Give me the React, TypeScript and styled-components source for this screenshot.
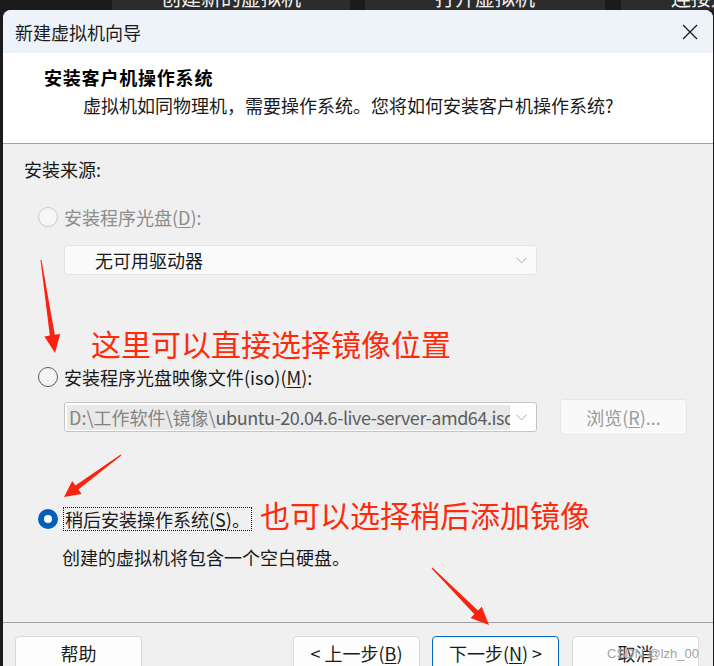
import React from "react";
import styled, { createGlobalStyle } from "styled-components";

const FONT = `"Noto Sans CJK SC", "Noto Sans", sans-serif`;

const Global = createGlobalStyle`
  html, body {
    margin: 0;
    padding: 0;
    width: 714px;
    height: 666px;
    overflow: hidden;
    background: #1b1b1b;
    font-family: ${FONT};
  }
  * { box-sizing: border-box; }
`;

const Page = styled.div`
  position: relative;
  width: 714px;
  height: 666px;
  overflow: hidden;
  display: flex;
  flex-direction: column;
`;

const TabStrip = styled.div`
  height: 10px;
  display: flex;
  overflow: hidden;
  flex-shrink: 0;
`;

const TabGap = styled.div<{ $w: number }>`
  width: ${(p) => p.$w}px;
  flex-shrink: 0;
  background: #1b1b1b;
`;

const Tab = styled.div<{ $w: number }>`
  width: ${(p) => p.$w}px;
  flex-shrink: 0;
  background: #2c2c2c;
  display: flex;
  justify-content: center;
  align-items: flex-start;
`;

const TabLabel = styled.span`
  margin-top: -12px;
  font-size: 20px;
  line-height: 20px;
  color: #f2f2f2;
  white-space: nowrap;
`;

const Dialog = styled.div`
  flex: 1;
  margin: 0 1px 0 3px;
  border-radius: 8px 8px 0 0;
  overflow: hidden;
  background: #f0f0f0;
  display: flex;
  flex-direction: column;
`;

const TitleBar = styled.div`
  height: 43px;
  flex-shrink: 0;
  background: #eef2f9;
  display: flex;
  align-items: center;
  justify-content: space-between;
  padding: 0 15px 0 12px;
`;

const Title = styled.span`
  font-size: 18px;
  line-height: 24px;
  color: #1a1a1a;
`;

const CloseButton = styled.span`
  width: 16px;
  height: 16px;
  display: flex;
  align-items: center;
  justify-content: center;
`;

const Header = styled.div`
  height: 91px;
  flex-shrink: 0;
  background: #ffffff;
  border-bottom: 1px solid #a3a3a3;
  padding: 12px 0 0 41px;
`;

const HeaderTitle = styled.div`
  font-size: 18px;
  line-height: 24px;
  font-weight: 700;
  letter-spacing: 0.8px;
  color: #000;
`;

const HeaderSub = styled.div`
  margin: 4px 0 0 39px;
  font-size: 18px;
  line-height: 24px;
  color: #1a1a1a;
`;

const Content = styled.div`
  height: 479px;
  flex-shrink: 0;
  border-bottom: 1px solid #a0a0a0;
  padding: 13px 0 0 21px;
  display: flex;
  flex-direction: column;
  align-items: flex-start;
`;

const SourceLabel = styled.div`
  font-size: 18px;
  line-height: 24px;
  color: #1a1a1a;
`;

const RadioRow = styled.div<{ $top: number; $h?: number }>`
  margin-top: ${(p) => p.$top}px;
  height: ${(p) => p.$h ?? 24}px;
  padding-left: 14px;
  display: flex;
  align-items: center;
  gap: 6px;
`;

const Radio = styled.span<{ $state: "disabled" | "normal" | "checked" }>`
  width: 20px;
  height: 20px;
  border-radius: 50%;
  flex-shrink: 0;
  ${(p) =>
    p.$state === "disabled"
      ? `border: 1px solid #c9c9c9; background: #f6f6f6;`
      : p.$state === "normal"
      ? `border: 1px solid #5b5b5b; background: #f4f4f4;`
      : `border: 6px solid #005fb8; background: #ffffff;`}
`;

const RadioLabel = styled.span<{ $disabled?: boolean; $focused?: boolean }>`
  font-size: 18px;
  line-height: 22px;
  white-space: nowrap;
  color: ${(p) => (p.$disabled ? "#8c8c8c" : "#1a1a1a")};
  ${(p) =>
    p.$focused
      ? `outline: 1px dotted #111; outline-offset: 0px; padding: 0 1px;`
      : ""}
`;

const Key = styled.span`
  text-decoration: underline;
  text-underline-offset: 2px;
`;

const Combo = styled.div<{ $disabled?: boolean; $top: number }>`
  margin: ${(p) => p.$top}px 0 0 40px;
  width: 473px;
  height: 30px;
  flex-shrink: 0;
  border-radius: 3px;
  border: 1px solid ${(p) => (p.$disabled ? "#e4e4e4" : "#c4c4c4")};
  background: ${(p) => (p.$disabled ? "#fafafa" : "#ffffff")};
  display: flex;
  align-items: center;
  justify-content: space-between;
  padding: 0 9px 0 2px;
`;

const ComboText = styled.span`
  padding-left: 28px;
  font-size: 18px;
  line-height: 24px;
  color: #1a1a1a;
`;

const PathField = styled.span`
  width: 443px;
  height: 25px;
  overflow: hidden;
  white-space: nowrap;
  background: #e9e9e9;
  padding-left: 2px;
  font-size: 18px;
  line-height: 25px;
  color: #5c5c5c;
`;

const PathPrefix = styled.span`
  color: #838383;
`;

const PathName = styled.span`
  letter-spacing: -0.45px;
`;

const FileRow = styled.div`
  margin-top: 10px;
  height: 36px;
  display: flex;
  align-items: center;
  gap: 23px;
`;

const BrowseButton = styled.span`
  width: 127px;
  height: 36px;
  border-radius: 4px;
  border: 1px solid #e6e6e6;
  background: #f9f9f9;
  display: flex;
  align-items: center;
  justify-content: center;
  font-size: 18px;
  color: #9b9b9b;
`;

const RedNote = styled.div<{ $inline?: boolean }>`
  font-family: ${FONT};
  font-size: 30px;
  line-height: 40px;
  color: #ff2a0c;
  white-space: nowrap;
  ${(p) =>
    p.$inline
      ? `margin: 0 0 10px 3px;`
      : `margin: 48px 0 0 67px;`}
`;

const Note = styled.div`
  margin: 6px 0 0 38px;
  font-size: 18px;
  line-height: 24px;
  color: #1a1a1a;
`;

const Footer = styled.div`
  flex: 1;
  display: flex;
  align-items: flex-start;
  padding: 13px 14px 0 12px;
`;

const Button = styled.span<{ $primary?: boolean; $gap?: number; $auto?: boolean }>`
  width: 127px;
  height: 36px;
  flex-shrink: 0;
  margin-left: ${(p) => (p.$auto ? "auto" : `${p.$gap ?? 0}px`)};
  border-radius: 4px;
  border: 1px solid ${(p) => (p.$primary ? "#0067c0" : "#d9d9d9")};
  background: #fdfdfd;
  display: flex;
  align-items: center;
  justify-content: center;
  padding-bottom: 2px;
  font-size: 18px;
  line-height: 24px;
  color: #1a1a1a;
  white-space: nowrap;
`;

const Overlay = styled.svg`
  position: absolute;
  left: 0;
  top: 0;
  pointer-events: none;
`;

const Watermark = styled.span`
  position: absolute;
  right: 15px;
  bottom: 5px;
  font-family: "Liberation Sans", Arial, sans-serif;
  font-size: 13px;
  color: rgba(140, 140, 140, 0.85);
  text-shadow: 0 0 2px #fff;
  white-space: nowrap;
`;

const Chevron = () => (
  <svg width="11" height="7" viewBox="0 0 11 7">
    <path d="M0.5 0.8 L5.5 5.8 L10.5 0.8" fill="none" stroke="#a8a8a8" strokeWidth="1" />
  </svg>
);

export default function App() {
  return (
    <Page>
      <Global />
      <TabStrip>
        <TabGap $w={112} />
        <Tab $w={238}>
          <TabLabel>创建新的虚拟机</TabLabel>
        </Tab>
        <TabGap $w={15} />
        <Tab $w={240}>
          <TabLabel>打开虚拟机</TabLabel>
        </Tab>
        <TabGap $w={16} />
        <Tab $w={240}>
          <TabLabel>连接远程服务器</TabLabel>
        </Tab>
      </TabStrip>
      <Dialog>
        <TitleBar>
          <Title>新建虚拟机向导</Title>
          <CloseButton>
            <svg width="16" height="16" viewBox="0 0 16 16">
              <path d="M1 1 L15 15 M15 1 L1 15" stroke="#1a1a1a" strokeWidth="1.3" />
            </svg>
          </CloseButton>
        </TitleBar>
        <Header>
          <HeaderTitle>安装客户机操作系统</HeaderTitle>
          <HeaderSub>虚拟机如同物理机，需要操作系统。您将如何安装客户机操作系统?</HeaderSub>
        </Header>
        <Content>
          <SourceLabel>安装来源:</SourceLabel>
          <RadioRow $top={24}>
            <Radio $state="disabled" />
            <RadioLabel $disabled>
              安装程序光盘(<Key>D</Key>):
            </RadioLabel>
          </RadioRow>
          <Combo $disabled $top={16}>
            <ComboText>无可用驱动器</ComboText>
            <Chevron />
          </Combo>
          <RedNote>这里可以直接选择镜像位置</RedNote>
          <RadioRow $top={2}>
            <Radio $state="normal" />
            <RadioLabel>
              安装程序光盘映像文件(iso)(<Key>M</Key>):
            </RadioLabel>
          </RadioRow>
          <FileRow>
            <Combo $top={0}>
              <PathField>
                <PathPrefix>D:\工作软件\镜像\</PathPrefix>
                <PathName>ubuntu-20.04.6-live-server-amd64.iso</PathName>
              </PathField>
              <Chevron />
            </Combo>
            <BrowseButton>
              浏览(<Key>R</Key>)...
            </BrowseButton>
          </FileRow>
          <RadioRow $top={64} $h={40}>
            <Radio $state="checked" />
            <RadioLabel $focused>
              稍后安装操作系统(<Key>S</Key>)。
            </RadioLabel>
            <RedNote $inline>也可以选择稍后添加镜像</RedNote>
          </RadioRow>
          <Note>创建的虚拟机将包含一个空白硬盘。</Note>
        </Content>
        <Footer>
          <Button>帮助</Button>
          <Button $auto>
            &lt; 上一步(<Key>B</Key>)
          </Button>
          <Button $primary $gap={12}>
            下一步(<Key>N</Key>) &gt;
          </Button>
          <Button $gap={13}>取消</Button>
        </Footer>
      </Dialog>
      <Overlay width="714" height="666" viewBox="0 0 714 666">
        <polygon
          fill="#f8240f"
          points="41.5,259.9 54.8,334.8 60.2,334.0 55,353 44.4,336.4 49.8,335.6 40.5,260.1"
        />
        <polygon
          fill="#f8240f"
          points="121.3,455.4 78.4,489.5 81.6,493.9 64,497 72.2,481.1 75.4,485.5 120.7,454.6"
        />
        <polygon
          fill="#f8240f"
          points="432.4,567.6 478.0,610.6 481.8,606.7 489,625 470.6,618.1 474.4,614.2 431.6,568.4"
        />
      </Overlay>
      <Watermark>CSDN @lzh_00</Watermark>
    </Page>
  );
}
